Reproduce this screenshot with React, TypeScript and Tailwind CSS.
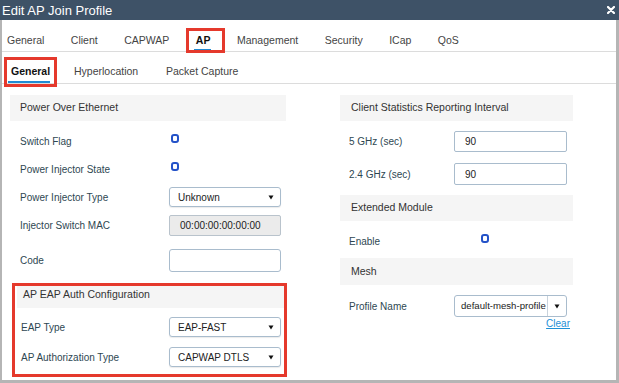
import React from "react";

const Arrow = () => (
  <svg width="6" height="5" viewBox="0 0 6 5" className="shrink-0">
    <path d="M0.5 0.5 L5.5 0.5 L3 4.5 Z" fill="#111" />
  </svg>
);

const Checkbox = () => (
  <div className="w-[8px] h-[9px] rounded-[3px] border-[2px] border-[#2452c8] -mt-[5px]" />
);

const Select = ({ value }: { value: string }) => (
  <div className="w-[112px] h-[20px] flex items-center justify-between pl-[8px] pr-[6px] border border-[#a9bccd] rounded-[3px] bg-white shadow-[0_1px_1px_rgba(0,0,0,0.08)] text-[10px] text-[#222]">
    <span>{value}</span>
    <Arrow />
  </div>
);

const Row = ({ label, children, h, mt, lw }: { label: string; children?: React.ReactNode; h: string; mt: string; lw: string }) => (
  <div className={`flex items-center ${h} ${mt}`}>
    <div className={`${lw} text-[10px] text-[#2e4752]`}>{label}</div>
    {children}
  </div>
);

const SectionHeader = ({ title, cls }: { title: string; cls: string }) => (
  <div className={`bg-[#f5f5f5] flex items-center text-[10.5px] text-[#333] ${cls}`}>{title}</div>
);

export default function App() {
  const tabs = ["General", "Client", "CAPWAP", "AP", "Management", "Security", "ICap", "QoS"];
  return (
    <div className="w-[619px] h-[383px] flex flex-col bg-white" style={{ fontFamily: '"Liberation Sans", Arial, sans-serif' }}>
      <div className="h-[20px] bg-[#3e5267] flex items-center justify-between pl-[2px] pr-[4px] shrink-0">
        <span className="text-white text-[13px] leading-none">Edit AP Join Profile</span>
        <svg width="8" height="8" viewBox="0 0 8 8">
          <path d="M1 1 L7 7 M7 1 L1 7" stroke="#fff" strokeWidth="2.2" strokeLinecap="round" />
        </svg>
      </div>
      <div className="flex-1 flex flex-col border-l-[2px] border-r-[3px] border-b-[3px] border-[#b5b5b5] min-h-0">
        {/* main tabs */}
        <div className="h-[32px] border-b border-[#dcdcdc] flex gap-[26.5px] pl-[5px] pt-[14px] shrink-0">
          {tabs.map((t) => (
            <div key={t} className={`relative h-[13px] leading-[13px] text-[10.5px] ${t === "AP" ? "font-bold text-[#111]" : "text-[#444]"}`}>
              {t}
              {t === "AP" && (
                <>
                  <div className="absolute left-[-2px] right-[-1px] top-[15px] h-[2px] bg-[#1f8ad3]" />
                  <div className="absolute left-[-10px] right-[-15px] top-[-6px] h-[25px] border-[3px] border-[#e5392c]" />
                </>
              )}
            </div>
          ))}
        </div>
        {/* sub tabs */}
        <div className="h-[32px] border-b border-[#dcdcdc] flex pl-[9px] pt-[13px] shrink-0">
          <div className="relative h-[13px] leading-[13px] text-[10.5px] font-bold text-[#111] w-[63px]">
            General
            <div className="absolute left-[-3px] w-[42px] top-[16px] h-[2px] bg-[#1f8ad3]" />
            <div className="absolute left-[-7px] w-[53px] top-[-8px] h-[30px] border-[3px] border-[#e5392c]" />
          </div>
          <div className="h-[13px] leading-[13px] text-[10.5px] text-[#444] w-[92px]">Hyperlocation</div>
          <div className="h-[13px] leading-[13px] text-[10.5px] text-[#444]">Packet Capture</div>
        </div>
        {/* content */}
        <div className="flex pl-[8px] gap-[54px]">
          <div className="w-[276px] flex flex-col">
            <SectionHeader title="Power Over Ethernet" cls="mt-[11px] h-[26px] pl-[10px]" />
            <Row label="Switch Flag" h="h-[28px]" mt="mt-[6px]" lw="w-[159px] pl-[10px]">
              <div className="pl-[2px]"><Checkbox /></div>
            </Row>
            <Row label="Power Injector State" h="h-[28px]" mt="" lw="w-[159px] pl-[10px]">
              <div className="pl-[2px]"><Checkbox /></div>
            </Row>
            <Row label="Power Injector Type" h="h-[28px]" mt="" lw="w-[159px] pl-[10px]">
              <Select value="Unknown" />
            </Row>
            <Row label="Injector Switch MAC" h="h-[29px]" mt="" lw="w-[159px] pl-[10px]">
              <div className="w-[112px] h-[21px] flex items-center pl-[10px] border border-[#b9c3cc] rounded-[2px] bg-[#ebebeb] text-[10px] text-[#222]">
                00:00:00:00:00:00
              </div>
            </Row>
            <Row label="Code" h="h-[40px]" mt="" lw="w-[159px] pl-[10px]">
              <div className="w-[112px] h-[23px] border border-[#a9bccd] rounded-[3px] bg-white" />
            </Row>
            <div className="mt-[3px] ml-[2px] w-[275px] border-[3px] border-[#e5392c] flex flex-col pb-[7px]">
              <div className="bg-[#f5f5f5] h-[22px] pl-[6px] pt-[2px] leading-[13px] text-[10.5px] text-[#333] ml-[2px]">AP EAP Auth Configuration</div>
              <Row label="EAP Type" h="h-[20px]" mt="mt-[9px]" lw="w-[154px] pl-[6px]">
                <Select value="EAP-FAST" />
              </Row>
              <Row label="AP Authorization Type" h="h-[20px]" mt="mt-[10px]" lw="w-[154px] pl-[6px]">
                <Select value="CAPWAP DTLS" />
              </Row>
            </div>
          </div>
          <div className="w-[233px] flex flex-col">
            <SectionHeader title="Client Statistics Reporting Interval" cls="mt-[11px] h-[26px] pl-[11px]" />
            <Row label="5 GHz (sec)" h="h-[21px]" mt="mt-[10px]" lw="w-[114px] pl-[9px]">
              <div className="w-[113px] h-[21px] flex items-center pl-[10px] border border-[#a9bccd] rounded-[2px] text-[10px] text-[#222]">90</div>
            </Row>
            <Row label="2.4 GHz (sec)" h="h-[22px]" mt="mt-[11px]" lw="w-[114px] pl-[9px]">
              <div className="w-[113px] h-[22px] flex items-center pl-[10px] border border-[#a9bccd] rounded-[2px] text-[10px] text-[#222]">90</div>
            </Row>
            <SectionHeader title="Extended Module" cls="mt-[10px] h-[26px] pl-[11px]" />
            <Row label="Enable" h="h-[20px]" mt="mt-[10px]" lw="w-[141px] pl-[9px]">
              <Checkbox />
            </Row>
            <SectionHeader title="Mesh" cls="mt-[7px] h-[27px] pl-[11px]" />
            <Row label="Profile Name" h="h-[22px]" mt="mt-[10px]" lw="w-[114px] pl-[9px]">
              <div className="w-[113px] h-[22px] flex items-center border border-[#a9bccd] rounded-[3px] bg-white text-[9.6px] text-[#222] overflow-hidden">
                <div className="flex-1 pl-[6px] whitespace-nowrap">default-mesh-profile</div>
                <div className="w-[19px] h-full border-l border-[#c9d3dc] flex items-center justify-center shrink-0">
                  <Arrow />
                </div>
              </div>
            </Row>
            <div className="flex justify-end pr-[3px] mt-[1px]">
              <span className="text-[10px] leading-[11px] text-[#1e8fd6] underline">Clear</span>
            </div>
          </div>
        </div>
      </div>
    </div>
  );
}
